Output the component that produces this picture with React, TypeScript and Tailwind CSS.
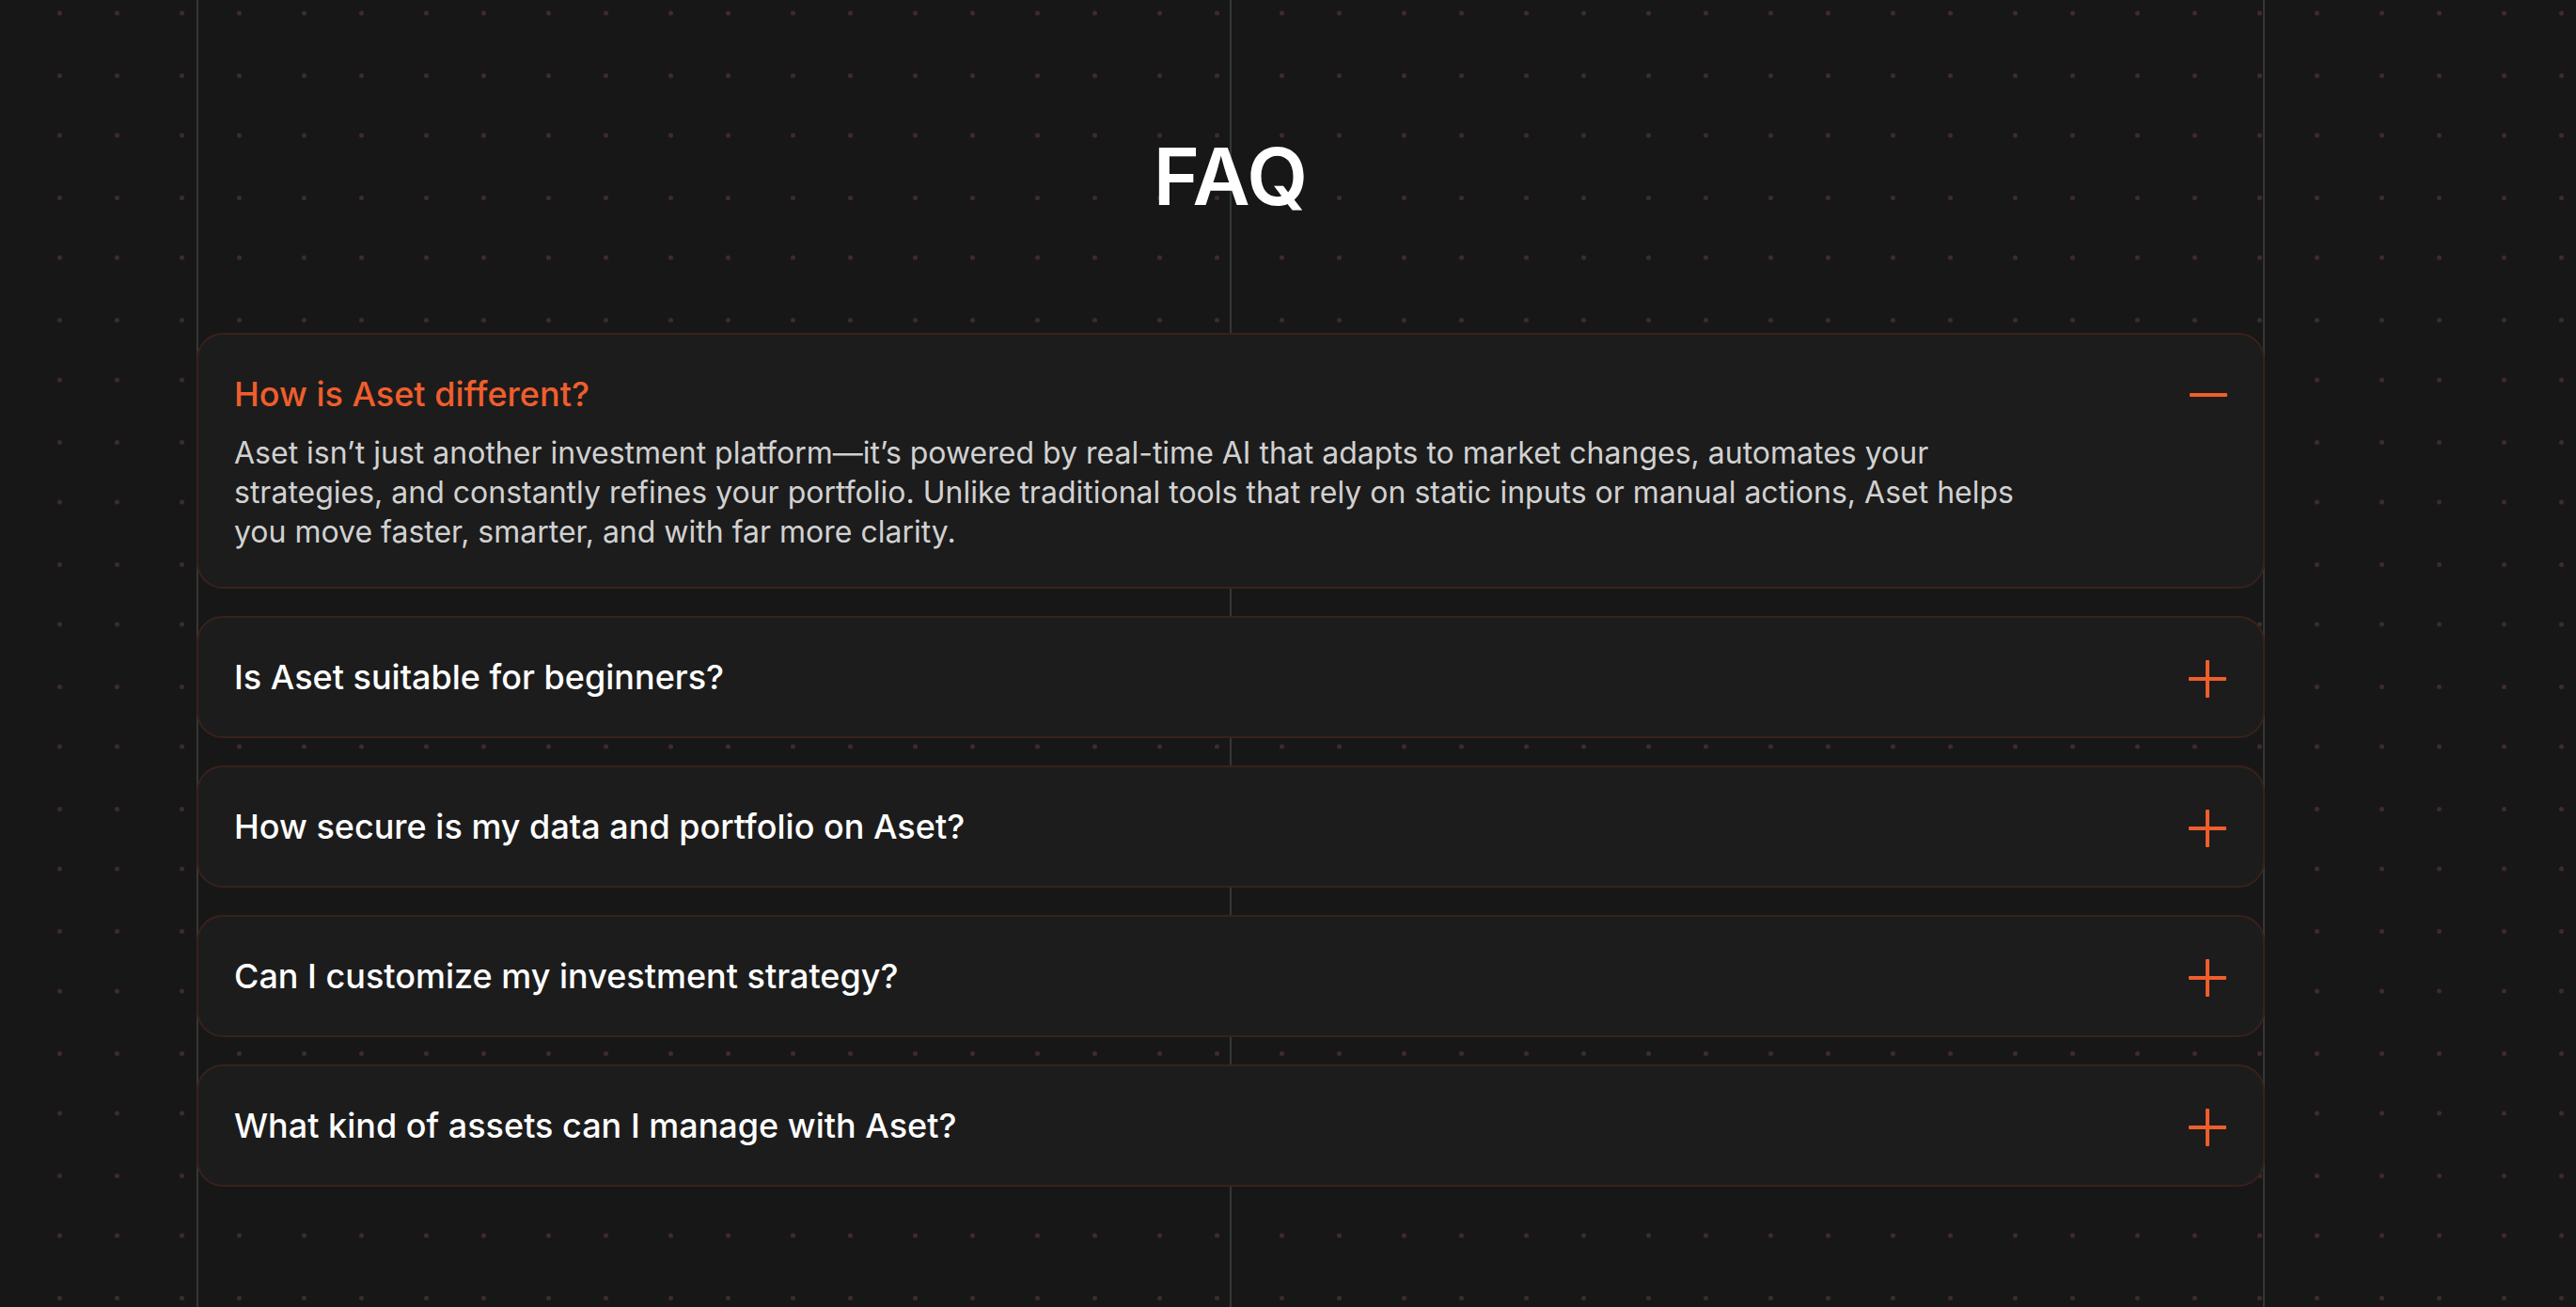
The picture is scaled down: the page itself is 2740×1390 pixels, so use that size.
import { useState } from "react";

const faqs = [
  {
    question: "How is Aset different?",
    answer:
      "Aset isn’t just another investment platform—it’s powered by real-time AI that adapts to market changes, automates your strategies, and constantly refines your portfolio. Unlike traditional tools that rely on static inputs or manual actions, Aset helps you move faster, smarter, and with far more clarity.",
  },
  {
    question: "Is Aset suitable for beginners?",
    answer:
      "Yes. Aset guides you through every step and adapts to your level of experience.",
  },
  {
    question: "How secure is my data and portfolio on Aset?",
    answer: "Your data is encrypted both in transit and at rest.",
  },
  {
    question: "Can I customize my investment strategy?",
    answer: "Yes. Set your own goals, limits and risk profile at any time.",
  },
  {
    question: "What kind of assets can I manage with Aset?",
    answer: "Stocks, funds, bonds and digital assets, all in one place.",
  },
];

function DotGrid() {
  return (
    <svg className="absolute inset-0 h-full w-full" aria-hidden="true">
      <defs>
        <pattern id="dots" width="130" height="130" patternUnits="userSpaceOnUse">
          <g fill="#3d2c27">
            <circle cx="63.5" cy="14" r="2.5" />
            <circle cx="124.5" cy="14" r="2.5" />
            <circle cx="63.5" cy="80.5" r="2.5" />
            <circle cx="124.5" cy="80.5" r="2.5" />
          </g>
        </pattern>
      </defs>
      <rect width="100%" height="100%" fill="url(#dots)" />
    </svg>
  );
}

function ToggleIcon({ open }: { open: boolean }) {
  return (
    <svg
      viewBox="0 0 40 40"
      className="size-10 shrink-0 overflow-visible"
      fill="#ef5e2d"
      aria-hidden="true"
    >
      {open ? (
        <rect x="0" y="19" width="40" height="4" rx="1" />
      ) : (
        <>
          <rect x="-1" y="20" width="40" height="4" rx="1" />
          <rect x="17" y="2" width="4" height="40" rx="1" />
        </>
      )}
    </svg>
  );
}

export default function App() {
  const [openIndex, setOpenIndex] = useState(0);

  return (
    <main className="relative flex min-h-screen bg-[#171717] pr-[331px] pl-[209px] font-['Inter',sans-serif]">
      <DotGrid />
      <section className="relative flex flex-1 flex-col pb-24">
        <div className="absolute inset-0 grid grid-cols-2 border-x-2 border-[#363636]" aria-hidden="true">
          <div className="-mr-px border-r-2 border-[#363636]" />
        </div>
        <h2 className="relative pt-[138px] pb-[116px] text-center text-[84px] leading-[100px] font-semibold text-white">
          FAQ
        </h2>
        <div className="relative flex flex-col gap-[29px]">
          {faqs.map(({ question, answer }, i) => {
            const open = i === openIndex;
            return (
              <div
                key={question}
                className="rounded-[28px] border-2 border-[#38221b] bg-[#1c1c1c]"
              >
                <h3>
                  <button
                    type="button"
                    aria-expanded={open}
                    aria-controls={`answer-${i}`}
                    onClick={() => setOpenIndex(open ? -1 : i)}
                    className={
                      open
                        ? "flex w-full items-center justify-between px-[38px] pt-10 pb-[19px] text-left text-4xl leading-[46px] font-medium text-[#ef5e2d]"
                        : "flex w-full items-center justify-between px-[38px] py-10 text-left text-4xl leading-[46px] font-medium text-white"
                    }
                  >
                    {question}
                    <ToggleIcon open={open} />
                  </button>
                </h3>
                {open && (
                  <p
                    id={`answer-${i}`}
                    className="max-w-[2000px] px-[38px] pb-[37px] text-[32px] leading-[42px] text-[#d1d1d1]"
                  >
                    {answer}
                  </p>
                )}
              </div>
            );
          })}
        </div>
      </section>
    </main>
  );
}
